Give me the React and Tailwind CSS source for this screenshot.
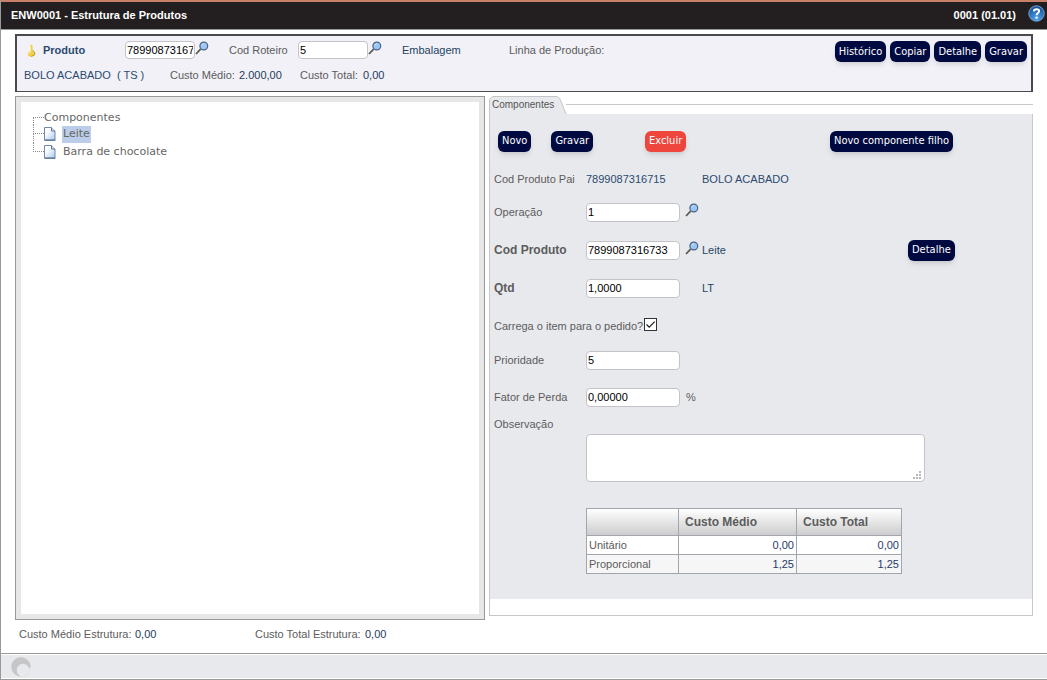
import { useState } from 'react'

const Button = ({ children, danger }) => (
  <button
    type="button"
    className={
      danger
        ? "h-[21px] rounded-md bg-[#ee463c] px-1 font-['DejaVu_Sans_Condensed','DejaVu_Sans',sans-serif] text-[11px] whitespace-nowrap text-white shadow-md"
        : "h-[21px] rounded-md bg-[#010a40] px-1 font-['DejaVu_Sans_Condensed','DejaVu_Sans',sans-serif] text-[11px] whitespace-nowrap text-white shadow-md"
    }
  >
    {children}
  </button>
)

const Search = ({ label }) => (
  <button type="button" aria-label={label} className="mb-1 shrink-0">
    <svg width="14" height="14" viewBox="0 0 14 14">
      <path d="M1 13 L5.6 8.2" stroke="#5a5a50" strokeWidth="1.8" />
      <circle cx="8.8" cy="5" r="3.9" fill="#9cc6f4" stroke="#4a6484" strokeWidth="1.2" />
      <path d="M6.7 4.6 A2.4 2.4 0 0 1 9 2.7" fill="none" stroke="#cfe4fb" />
    </svg>
  </button>
)

const Field = ({ id, value, small }) => (
  <input
    id={id}
    defaultValue={value}
    className={
      small
        ? 'h-[18px] w-[70px] shrink-0 rounded border border-[#c4c4c8] bg-white px-px text-black outline-none'
        : 'h-[19px] w-[94px] shrink-0 rounded border border-[#c4c4c8] bg-white px-px text-black outline-none'
    }
  />
)

const FileIcon = () => (
  <svg width="12" height="14" viewBox="0 0 12 14" className="shrink-0">
    <defs>
      <linearGradient id="paper" x1="0" y1="0" x2="1" y2="1">
        <stop offset="0.3" stopColor="#ffffff" />
        <stop offset="1" stopColor="#a9c8ee" />
      </linearGradient>
    </defs>
    <path d="M0.5 0.5 H7.5 L11 4 V13 H0.5 Z" fill="url(#paper)" stroke="#7089ac" />
    <path d="M7.5 0.5 V4 H11" fill="#dce8f7" stroke="#5e7699" />
    <path d="M0.5 13.2 H11.4" stroke="#48607f" />
  </svg>
)

const TreeItem = ({ name, selected, last }) => (
  <li className="flex h-[18px] items-center">
    <span className="flex h-full w-[11px] shrink-0 flex-col">
      <span className="h-[9px] border-b border-l border-dotted border-[#888]"></span>
      {!last && <span className="h-[9px] border-l border-dotted border-[#888]"></span>}
    </span>
    <FileIcon />
    <button
      type="button"
      className={selected ? 'ml-[6px] h-[17px] bg-[#bccde9] px-px' : 'ml-[6px] h-[17px] px-px'}
    >
      {name}
    </button>
  </li>
)

const App = () => {
  const [checked, setChecked] = useState(true)

  return (
    <div className="flex min-h-screen flex-col border-l border-[#999] bg-white font-['Liberation_Sans',Arial,sans-serif] text-[11px] leading-4 text-[#5c5c5c]">
      <header className="flex h-[30px] items-center justify-between border-t-2 border-b border-t-[#c98068] border-b-[#999] bg-[#231f20] pr-[2px] pb-px pl-[10px] font-bold text-white">
        <h1>ENW0001 - Estrutura de Produtos</h1>
        <div className="flex items-center gap-3">
          <span>0001 (01.01)</span>
          <button type="button" aria-label="Ajuda" className="mb-1">
            <svg width="17" height="17" viewBox="0 0 17 17">
              <defs>
                <radialGradient id="help" cx="0.5" cy="0.85" r="0.8">
                  <stop offset="0" stopColor="#4fa8ee" />
                  <stop offset="1" stopColor="#174f9c" />
                </radialGradient>
              </defs>
              <circle cx="8.5" cy="8.5" r="7.7" fill="url(#help)" stroke="#7ba5cf" />
              <path d="M5.9 6.4 C6 3.4 11.2 3.4 11.1 6.3 C11 8 8.6 8 8.6 10.2" fill="none" stroke="#fff" strokeWidth="2" />
              <circle cx="8.6" cy="12.6" r="1.2" fill="#fff" />
            </svg>
          </button>
        </div>
      </header>

      <div className="flex flex-1 flex-col px-[14px] pt-1">
        <section className="flex h-[58px] justify-between border border-t-2 border-l-2 border-r-2 border-[#4a4a4e] bg-[#f1f1f7] pr-1">
          <div>
            <div className="flex h-7 items-center">
              <svg width="9" height="13" viewBox="0 0 9 13" className="ml-[10px] shrink-0">
                <path d="M3 1.5 Q4.5 0 5.5 1.5 V7 L8 9 Q8.5 12 5 12.5 H2 Q0 11 1.5 8.5 L3 7 Z" fill="#f2d04b" />
                <path d="M3.4 2 V7.5 L2 9.5" stroke="#fff2ae" fill="none" />
                <path d="M5.5 6 L8 9.2 Q8 12 4 12.4" stroke="#c89b1e" fill="none" />
              </svg>
              <label htmlFor="produto" className="ml-[7px] w-[82px] font-bold text-[#2c4a70]">Produto</label>
              <Field id="produto" value="7899087316715" small />
              <Search label="Buscar produto" />
              <label htmlFor="roteiro" className="ml-5 w-[69px]">Cod Roteiro</label>
              <Field id="roteiro" value="5" small />
              <Search label="Buscar roteiro" />
              <span className="ml-5 w-[107px] text-[#1f4463]">Embalagem</span>
              <span>Linha de Produção:</span>
            </div>
            <div className="flex h-[22px] items-center pl-[7px]">
              <span className="w-[146px] whitespace-pre text-[#2c4a70]">BOLO ACABADO  ( TS )</span>
              <span className="w-[69px]">Custo Médio:</span>
              <span className="w-[61px] text-[#1f3a5c]">2.000,00</span>
              <span className="w-[63px]">Custo Total:</span>
              <span className="text-[#1f3a5c]">0,00</span>
            </div>
          </div>
          <div className="flex gap-1 pt-[5px]">
            <Button>Histórico</Button>
            <Button>Copiar</Button>
            <Button>Detalhe</Button>
            <Button>Gravar</Button>
          </div>
        </section>

        <main className="mt-1 grid flex-1 grid-cols-[470fr_544fr] gap-1">
          <section className="border border-[#999] bg-[#e7e7e7] p-[5px]">
            <div className="h-full bg-white pt-2 pl-3 font-['DejaVu_Sans',Verdana,sans-serif] text-[11px] text-[#666]">
              <div className="flex h-[15px] items-center">
                <span className="h-2 w-[11px] self-end border-t border-l border-dotted border-[#888]"></span>
                <span>Componentes</span>
              </div>
              <ul>
                <TreeItem name="Leite" selected />
                <TreeItem name="Barra de chocolate" last />
              </ul>
            </div>
          </section>

          <section className="flex flex-col pb-1">
            <div className="flex h-[18px]">
              <div className="relative h-[18px] w-[77px] shrink-0">
                <svg width="78" height="18" viewBox="0 0 78 18" className="absolute top-0 left-0">
                  <path d="M0.5 18 V3.5 L3.5 0.5 H67 Q70 0.5 71 3 L77 18" fill="#e8e9ed" stroke="#c6c6c6" />
                </svg>
                <button type="button" className="relative block pl-[3px] text-[10px] leading-[18px] text-[#555]">Componentes</button>
              </div>
              <div className="mt-2 flex-1 border-t border-[#c8c8c8]"></div>
            </div>
            <form className="flex flex-1 flex-col border-r border-b border-l border-[#c8c8c8] pb-4">
              <div className="flex-1 bg-[#e8e9ed] pl-1">
                <div className="flex h-[54px] items-center pl-1">
                  <div className="flex w-[147px] gap-5">
                    <Button>Novo</Button>
                    <Button>Gravar</Button>
                  </div>
                  <div className="w-[185px]">
                    <Button danger>Excluir</Button>
                  </div>
                  <Button>Novo componente filho</Button>
                </div>
                <div className="flex h-[22px] items-center">
                  <span className="w-[92px]">Cod Produto Pai</span>
                  <span className="w-[116px] text-[#2c4a70]">7899087316715</span>
                  <span className="text-[#2c4a70]">BOLO ACABADO</span>
                </div>
                <div className="flex h-[44px] items-center">
                  <label htmlFor="operacao" className="w-[92px]">Operação</label>
                  <Field id="operacao" value="1" />
                  <span className="w-[22px] pl-[5px]"><Search label="Buscar operação" /></span>
                </div>
                <div className="flex h-8 items-center">
                  <label htmlFor="cod" className="w-[92px] text-xs font-bold">Cod Produto</label>
                  <Field id="cod" value="7899087316733" />
                  <span className="w-[22px] pl-[5px]"><Search label="Buscar componente" /></span>
                  <span className="w-[206px] text-[#1f4463]">Leite</span>
                  <Button>Detalhe</Button>
                </div>
                <div className="flex h-[44px] items-center">
                  <label htmlFor="qtd" className="w-[92px] text-xs font-bold">Qtd</label>
                  <Field id="qtd" value="1,0000" />
                  <span className="pl-[22px] text-[#1f4463]">LT</span>
                </div>
                <div className="flex h-8 items-center gap-px">
                  <label htmlFor="carrega">Carrega o item para o pedido?</label>
                  <span className="relative mb-1 size-[13px]">
                    <input
                      id="carrega"
                      type="checkbox"
                      checked={checked}
                      onChange={(e) => setChecked(e.target.checked)}
                      className="block size-[13px] appearance-none border border-[#333] bg-white"
                    />
                    {checked && (
                      <svg width="13" height="13" viewBox="0 0 13 13" className="pointer-events-none absolute top-0 left-0">
                        <path d="M2.5 6.5 L5.2 9.2 L10.7 3.6" fill="none" stroke="#222" strokeWidth="1.3" />
                      </svg>
                    )}
                  </span>
                </div>
                <div className="flex h-9 items-center">
                  <label htmlFor="prioridade" className="w-[92px]">Prioridade</label>
                  <Field id="prioridade" value="5" />
                </div>
                <div className="flex h-[38px] items-center">
                  <label htmlFor="fator" className="w-[92px]">Fator de Perda</label>
                  <Field id="fator" value="0,00000" />
                  <span className="pl-[6px]">%</span>
                </div>
                <label htmlFor="obs" className="block h-[18px]">Observação</label>
                <div className="relative ml-[92px] h-12 w-[339px]">
                  <textarea
                    id="obs"
                    className="block h-full w-full resize-none rounded border border-[#c4c4c8] bg-white p-px text-black outline-none"
                  ></textarea>
                  <svg width="8" height="8" viewBox="0 0 8 8" className="pointer-events-none absolute right-1 bottom-[3px]">
                    <path d="M6 0h2v2h-2zM3 3h2v2h-2zM6 3h2v2h-2zM0 6h2v2h-2zM3 6h2v2h-2zM6 6h2v2h-2z" fill="#b8b8b8" />
                  </svg>
                </div>
                <table className="mt-[26px] ml-[92px] w-[316px] table-fixed border-collapse">
                  <thead>
                    <tr className="h-[27px] bg-linear-to-b from-white to-[#cbcbcb] text-left text-xs">
                      <th className="w-[92px] border border-[#a0a6ac]"></th>
                      <th className="w-[118px] border border-[#a0a6ac] px-[6px]">Custo Médio</th>
                      <th className="border border-[#a0a6ac] px-[6px]">Custo Total</th>
                    </tr>
                  </thead>
                  <tbody>
                    <tr className="h-[19px] bg-white">
                      <td className="border border-[#a0a6ac] px-[2px] pb-px">Unitário</td>
                      <td className="border border-[#a0a6ac] px-[2px] pb-px text-right text-[#1f3a6c]">0,00</td>
                      <td className="border border-[#a0a6ac] px-[2px] pb-px text-right text-[#1f3a6c]">0,00</td>
                    </tr>
                    <tr className="h-[19px] bg-[#f6f6f6]">
                      <td className="border border-[#a0a6ac] px-[2px] pb-px">Proporcional</td>
                      <td className="border border-[#a0a6ac] px-[2px] pb-px text-right text-[#1f3a6c]">1,25</td>
                      <td className="border border-[#a0a6ac] px-[2px] pb-px text-right text-[#1f3a6c]">1,25</td>
                    </tr>
                  </tbody>
                </table>
              </div>
            </form>
          </section>
        </main>

        <div className="flex h-[33px] items-center pb-[5px] pl-1">
          <span className="w-[116px]">Custo Médio Estrutura:</span>
          <span className="w-[120px] text-[#1f3a5c]">0,00</span>
          <span className="w-[110px]">Custo Total Estrutura:</span>
          <span className="text-[#1f3a5c]">0,00</span>
        </div>
      </div>

      <footer className="border-y border-[#999] py-px">
        <div className="flex h-[23px] items-center bg-[#e8e9ed] pl-[10px]">
          <svg width="20" height="20" viewBox="0 0 20 20">
            <path d="M19.5 8 A9.7 9.7 0 1 0 11 19.5 C5 18.5 4 10.5 9 7.5 C13 5.2 17.5 8 18.5 12 Q20 10 19.5 8 Z" fill="#c6c6c8" />
            <path d="M18.5 12 A7 7 0 0 1 11 19.5 Q18 18 18.5 12" fill="#d8d8da" />
          </svg>
        </div>
      </footer>
    </div>
  )
}

export default App
